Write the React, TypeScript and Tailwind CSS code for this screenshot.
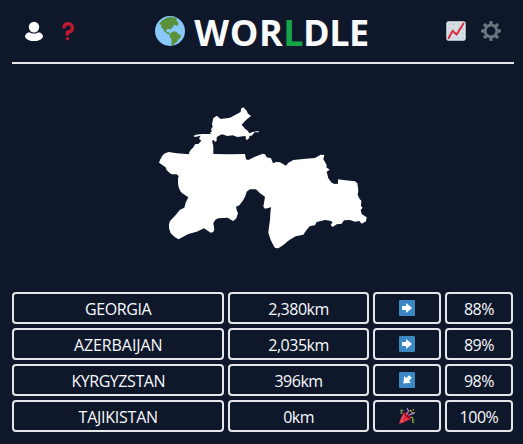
import type { ReactNode } from "react";

const PersonIcon = () => (
  <svg viewBox="0 0 36 36" className="size-5" fill="#fff">
    <ellipse cx="18" cy="11" rx="9.4" ry="9.7" />
    <path d="M9.5 20.2c2.4 1.6 5.2 2.4 8.5 2.4s6.100-.8 8.500-2.400c4 .3 7.800 4 7.700 7.500C33.500 32 26.500 36.500 18 36.500S2.500 32 1.800 27.700c-.1-3.500 3.700-7.200 7.700-7.500z" />
  </svg>
);

const QuestionIcon = () => (
  <svg viewBox="0 0 36 36" className="size-5" fill="#BE1931">
    <path d="M17 27c-1.657 0-3-1.343-3-3v-4c0-1.657 1.343-3 3-3 .603-.006 6-1 6-5 0-2-2-4-5-4-2.441 0-4 2-4 3 0 1.657-1.343 3-3 3s-3-1.343-3-3c0-4.878 4.580-9 10-9 8 0 11 5.982 11 11 0 4.145-2.277 7.313-6.413 8.920-.9.351-1.790.587-2.587.747V24c0 1.657-1.343 3-3 3z" />
    <circle cx="17" cy="32" r="3" />
  </svg>
);

const ChartIcon = () => (
  <svg viewBox="0 0 36 36" className="size-5">
    <rect x="0.500" y="0.500" width="35" height="35" rx="4" fill="#E1E8ED" />
    <path d="M3 3h30v30H3z" fill="#CCD6DD" />
    <path d="M10 2v32M18 2v32M26 2v32M2 10h32M2 18h32M2 26h32" stroke="#E1E8ED" strokeWidth="1.500" />
    <path d="M4.500 31 12 17.500l7 7L31.500 4.500" fill="none" stroke="#DD2E44" strokeWidth="3.600" strokeLinecap="round" strokeLinejoin="round" />
  </svg>
);

const GearIcon = () => (
  <svg viewBox="0 0 36 36" className="size-5" fill="#66757F">
    <path d="M34 15h-3.362c-.324-1.369-.864-2.651-1.582-3.814l2.379-2.379c.781-.781.781-2.048 0-2.829l-1.414-1.414c-.781-.781-2.047-.781-2.828 0l-2.379 2.379C23.650 6.225 22.369 5.686 21 5.362V2c0-1.104-.896-2-2-2h-2c-1.104 0-2 .896-2 2v3.362c-1.369.324-2.651.864-3.814 1.582L8.808 4.565c-.781-.781-2.048-.781-2.828 0L4.565 5.979c-.781.781-.781 2.048-.001 2.829l2.379 2.379C6.225 12.350 5.686 13.632 5.362 15H2c-1.104 0-2 .896-2 2v2c0 1.104.896 2 2 2h3.362c.324 1.368.864 2.650 1.582 3.813l-2.379 2.379c-.78.78-.78 2.048.001 2.829l1.414 1.414c.78.78 2.047.78 2.828 0l2.379-2.379c1.163.719 2.445 1.258 3.814 1.582V34c0 1.104.896 2 2 2h2c1.104 0 2-.896 2-2v-3.362c1.368-.324 2.650-.864 3.813-1.582l2.379 2.379c.781.781 2.047.781 2.828 0l1.414-1.414c.781-.781.781-2.048 0-2.829l-2.379-2.379c.719-1.163 1.258-2.445 1.582-3.814H34c1.104 0 2-.896 2-2v-2C36 15.896 35.104 15 34 15zM18 26c-4.418 0-8-3.582-8-8s3.582-8 8-8 8 3.582 8 8-3.582 8-8 8z" />
  </svg>
);

const GlobeIcon = () => (
  <svg viewBox="0 0 90 90" className="size-[30px]">
    <circle cx="45" cy="45" r="45" fill="#88C9F9" />
    <path
      fill="#5C913B"
      d="M15 20C23 11 32 5 43 4l5-2 6 3 8-1 5 5-4 4 5 4 3 8-5 4-7-3-5 3 2 4-7 3-2 5-5-2-7 1-1 6 4 3 4-2 1 5 6 4-3 2-9-5-8-6-5-8-6-6 1-6-6-3zM50 49l7-3 9 3 4 5 8 4-2 8-7 5-3 7-7 4-4 6-6-1 1-9-1-9-5-6 1-8z"
    />
  </svg>
);

const ArrowIcon = ({ className = "" }: { className?: string }) => (
  <svg viewBox="0 0 36 36" className="size-4">
    <rect width="36" height="36" rx="3" fill="#3B88C3" />
    <g className={className}>
      <path d="M7 13.500h9V7l13.500 11L16 29v-6.500H7z" fill="#fff" />
    </g>
  </svg>
);

const PartyIcon = () => (
  <svg viewBox="0 0 36 36" className="size-4">
    <path d="M11.500 9.500C7 17 2 29 .5 34c-.2 1.500.5 2 2 1.500C10 33 20 29 27.500 25c-1-7-9-15-16-15.500z" fill="#DD2E44" />
    <path d="M10 14C6 21 3 29 1 34l7-9c2-4 3-7 2-11z" fill="#EA596E" />
    <ellipse cx="20" cy="17.500" rx="4" ry="10" transform="rotate(-45 20 17.500)" fill="#A0041E" />
    <path d="M3 5c4-1 4 2 2 4s0 4 3 3M25 22c4-2 7-1 6 2s1 4 4 3M31 28c-2 2 0 5 3 5" fill="none" stroke="#77B255" strokeWidth="2.500" />
    <path d="M18 15c-2-5 5-5 3-9s-3-4-1-5M22 17c2-5 5-1 8-4s3-1 5 0" fill="none" stroke="#AA8DD8" strokeWidth="2.800" />
    <g fill="#FFCC4D">
      <circle cx="26" cy="6" r="2" />
      <circle cx="32" cy="4" r="1.600" />
      <circle cx="29" cy="10" r="1.600" />
      <circle cx="34" cy="10" r="1.300" />
      <circle cx="7" cy="30" r="1.500" />
      <circle cx="9" cy="5" r="1.300" />
    </g>
  </svg>
);

const CountryShape = () => (
  <svg viewBox="0 0 660 456" className="h-[152px] w-[220px]" fill="#fff">
    <path d="M27 188 31 178 38 166 45 160 56 156 80 160 100 161 116 163 120 152 130 142 136 132 145 132 154 122 147 116 152 107 135 111 130 108 138 104 155 102 183 102 180 97 186 95 183 88 188 80 186 72 190 55 200 47 212 57 240 53 272 36 273 26 280 22 290 32 294 41 303 48 288 60 275 74 285 86 293 92 298 100 308 96 326 93 326 97 314 97 305 107 299 107 297 115 292 119 287 118 288 111 285 108 262 111 248 106 232 108 216 103 205 108 200 112 200 122 195 126 191 120 186 122 190 138 190 162 240 163 285 162 288 178 295 180 315 170 338 161 345 163 350 172 363 175 369 190 378 186 390 187 408 197 415 188 430 180 460 177 495 174 512 164 523 165 520 178 530 195 529 202 539 209 530 215 535 235 545 248 554 252 564 251 564 238 580 240 600 242 615 244 622 250 625 270 623 285 629 297 634 302 633 318 638 323 632 330 635 342 650 352 648 364 635 371 628 363 615 365 600 360 582 361 575 371 560 373 548 381 542 375 548 366 540 362 525 360 500 366 495 376 480 378 470 389 460 404 437 409 418 420 400 435 385 445 375 444 367 430 362 420 355 398 357 380 360 360 361 340 363 322 345 326 340 320 345 290 330 280 318 268 300 268 290 275 286 288 280 300 268 316 258 320 260 330 264 340 259 355 250 363 244 360 233 353 205 355 196 359 190 370 193 388 190 396 182 398 162 385 140 395 115 402 86 418 75 412 62 400 57 385 57 373 60 363 75 347 90 329 103 323 107 308 115 292 100 282 92 275 86 262 84 250 84 235 86 228 80 223 65 223 60 220 50 210 47 202z" />
  </svg>
);

const Cell = ({ className, children }: { className?: string; children: ReactNode }) => (
  <div className={`flex h-8 items-center justify-center rounded border-2 border-gray-200 ${className ?? ""}`}>
    {children}
  </div>
);

const guesses = [
  { country: "GEORGIA", tracking: "tracking-[-0.4px]", distance: "2,380km", icon: <ArrowIcon />, percent: "88%" },
  { country: "AZERBAIJAN", tracking: "tracking-[-0.1px]", distance: "2,035km", icon: <ArrowIcon />, percent: "89%" },
  { country: "KYRGYZSTAN", tracking: "tracking-[-0.45px]", distance: "396km", icon: <ArrowIcon className="origin-center rotate-135" />, percent: "98%" },
  { country: "TAJIKISTAN", tracking: "tracking-[-0.25px]", distance: "0km", icon: <PartyIcon />, percent: "100%" },
];

export default function App() {
  return (
    <div className="h-[444px] w-full overflow-hidden bg-slate-900 pl-3 font-['Open_Sans','Noto_Sans',sans-serif] text-base text-slate-50">
      <header className="flex h-16 w-[502px] items-center justify-between border-b-2 border-gray-200 pr-[13px] pl-3">
        <div className="flex gap-3.5">
          <PersonIcon />
          <QuestionIcon />
        </div>
        <h1 className="flex items-center gap-[9px] text-4xl font-bold">
          <GlobeIcon />
          <span className="pt-1 tracking-[-0.5px]">
            <span className="tracking-[0.6px]">WOR</span>
            <span className="text-[#16a34a]">L</span>DLE
          </span>
        </h1>
        <div className="flex gap-[15px]">
          <ChartIcon />
          <GearIcon />
        </div>
      </header>
      <div className="flex h-[228px] pt-9 pl-[138px]">
        <CountryShape />
      </div>
      <main className="grid w-[501px] grid-cols-7 gap-1">
        {guesses.map((g) => (
          <div key={g.country} className="contents">
            <Cell className="col-span-3">
              <span className={`pt-0.5 ${g.tracking}`}>{g.country}</span>
            </Cell>
            <Cell className="col-span-2">
              <span className="pt-0.5 tracking-[-0.5px]">{g.distance}</span>
            </Cell>
            <Cell>{g.icon}</Cell>
            <Cell>
              <span className="pt-0.5 tracking-[-0.5px]">{g.percent}</span>
            </Cell>
          </div>
        ))}
      </main>
    </div>
  );
}
